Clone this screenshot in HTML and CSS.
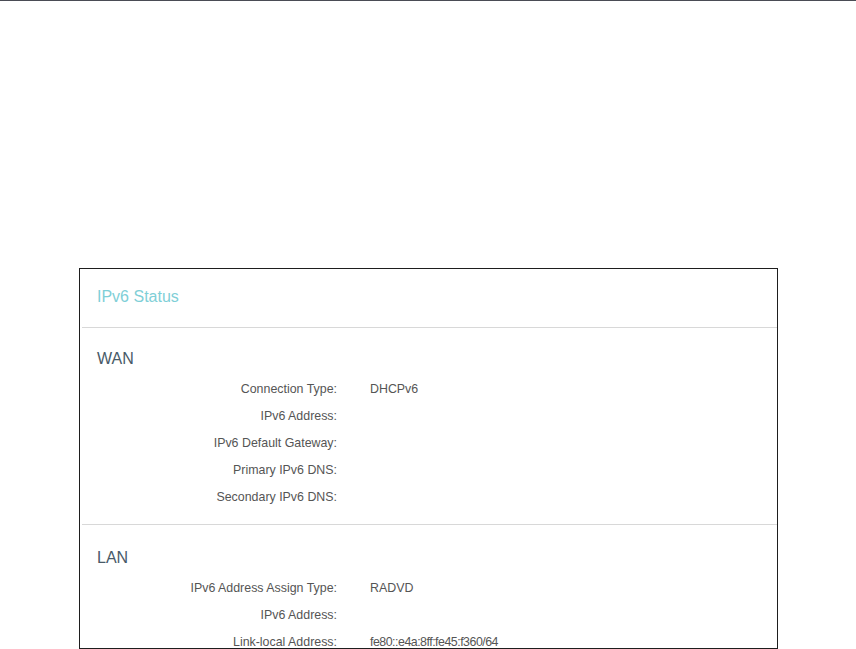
FILE: index.html
```html
<!DOCTYPE html>
<html>
<head>
<meta charset="utf-8">
<link rel="stylesheet" href="styles.css">
</head>
<body>
<div class="topbar"></div>
<div class="page">
  <div class="panel">
    <div class="panel-header">
      <h1 class="panel-title">IPv6 Status</h1>
    </div>
    <div class="section section-wan">
      <h2 class="section-title">WAN</h2>
      <div class="rows">
        <div class="label">Connection Type:</div><div class="value">DHCPv6</div>
        <div class="label">IPv6 Address:</div><div class="value"></div>
        <div class="label">IPv6 Default Gateway:</div><div class="value"></div>
        <div class="label">Primary IPv6 DNS:</div><div class="value"></div>
        <div class="label">Secondary IPv6 DNS:</div><div class="value"></div>
      </div>
    </div>
    <div class="section section-lan">
      <h2 class="section-title">LAN</h2>
      <div class="rows">
        <div class="label">IPv6 Address Assign Type:</div><div class="value">RADVD</div>
        <div class="label">IPv6 Address:</div><div class="value"></div>
        <div class="label">Link-local Address:</div><div class="value value-addr">fe80::e4a:8ff:fe45:f360/64</div>
      </div>
    </div>
  </div>
</div>
</body>
</html>
```

FILE: styles.css
```css
html, body {
  margin: 0;
  padding: 0;
  background: #ffffff;
  font-family: "Liberation Sans", Arial, sans-serif;
}

.topbar {
  height: 1px;
  background: #4a4c55;
}

.page {
  padding: 267px 0 0 79px;
}

.panel {
  box-sizing: border-box;
  width: 699px;
  height: 381px;
  border: 1px solid #1e1e1e;
  overflow: hidden;
  background: #fff;
}

.panel-header {
  padding: 18px 0 20px 17px;
  margin-left: 2px;
  border-bottom: 1px solid #d8d8d8;
}

.panel-title {
  margin: 0 0 0 -2px;
  font-size: 16px;
  line-height: 20px;
  font-weight: normal;
  color: #7fcfd7;
}

.section {
  margin-left: 2px;
  padding-left: 15px;
}

.section-wan {
  padding-top: 21px;
  padding-bottom: 13px;
  border-bottom: 1px solid #d8d8d8;
}

.section-lan {
  padding-top: 23px;
}

.section-title {
  margin: 0 0 7px 0;
  font-size: 16px;
  line-height: 20px;
  font-weight: normal;
  color: #485a68;
}

.rows {
  display: grid;
  grid-template-columns: 255px 1fr;
  column-gap: 33px;
  margin-left: -15px;
  font-size: 12.4px;
  line-height: 27px;
  color: #555555;
}

.label {
  text-align: right;
  min-height: 27px;
}

.value {
  min-height: 27px;
}

.value-addr {
  letter-spacing: -0.5px;
}
```
